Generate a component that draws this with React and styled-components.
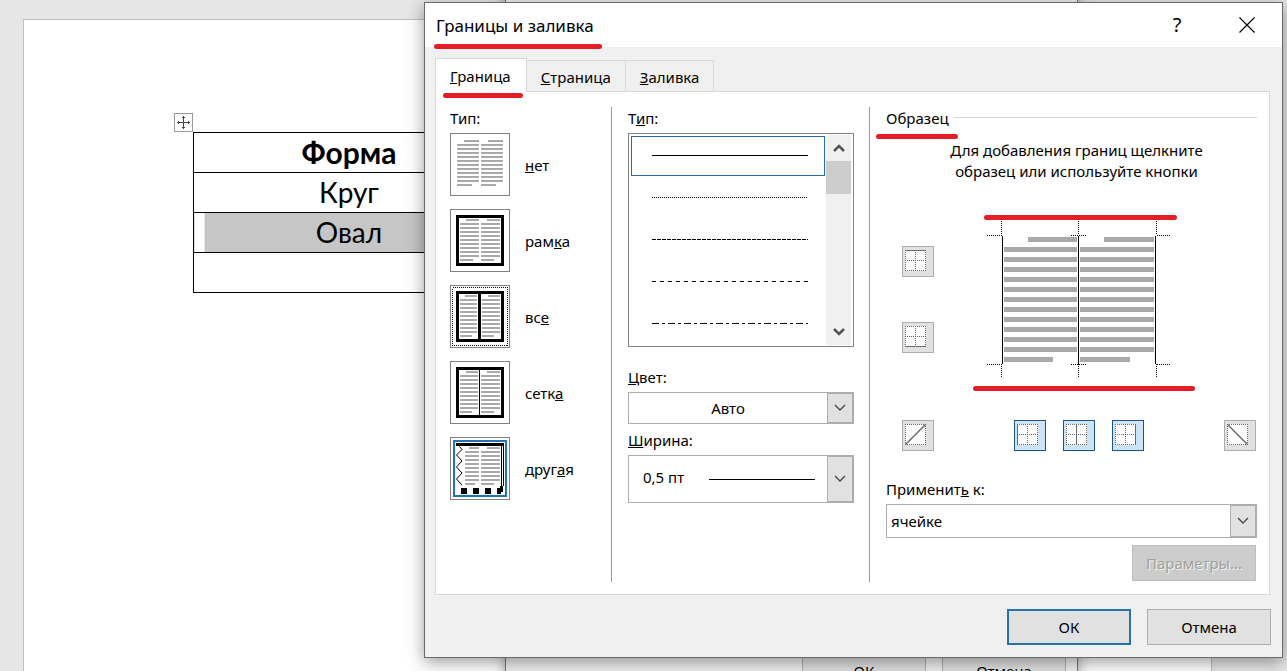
import React, { useState } from 'react';
import styled, { createGlobalStyle, css } from 'styled-components';

const GlobalStyle = createGlobalStyle`
  * {
    box-sizing: border-box;
  }

  body {
    margin: 0;
    background: #e6e6e6;
    color: #000;
    font-family: 'Noto Sans', 'Open Sans', sans-serif;
    font-size: 15px;
    line-height: 22px;
  }

  button, select {
    font: inherit;
    color: inherit;
  }
`;

const Workspace = styled.div`
  position: relative;
  display: flex;
  min-height: 100vh;
  overflow: hidden;
`;

const DocumentPage = styled.main`
  position: relative;
  flex: 1;
  margin: 19px 75px 0 23px;
  padding: 112px 0 0 169px;
  background: #fff;
  border: 1px solid #c0c0c0;
  border-bottom: 0;
`;

const MoveHandle = styled.button`
  position: absolute;
  top: 93px;
  left: 150px;
  display: flex;
  padding: 2px;
  background: #fff;
  border: 1px solid #9a9a9a;
`;

const DocumentTable = styled.table`
  width: 312px;
  border-collapse: collapse;
  font-family: Lato, 'Noto Sans', sans-serif;
  font-size: 28px;
  line-height: 39px;
  text-align: center;

  th, td {
    height: 40px;
    padding: 0;
    border: 1px solid #000;
  }

  th {
    font-size: 30px;
  }
`;

const Cell = styled.td`
  ${({ $selected }) => $selected && css`
    background: linear-gradient(to right, #fff 10px, #c6c6c6 10px);
  `}
`;

const BackDialog = styled.div`
  position: absolute;
  top: -12px;
  right: 209px;
  bottom: -33px;
  left: 505px;
  display: flex;
  align-items: flex-end;
  justify-content: flex-end;
  gap: 16px;
  padding: 0 11px 14px;
  background: #f0f0f0;
  border: 1px solid #777;
  box-shadow: 0 2px 12px rgba(0, 0, 0, 0.35);
`;

const Dialog = styled.section`
  position: absolute;
  top: 2px;
  right: 4px;
  left: 424px;
  background: #f0f0f0;
  border: 1px solid #6b6b6b;
  box-shadow: 0 4px 16px rgba(0, 0, 0, 0.4);
`;

const TitleBar = styled.header`
  display: flex;
  align-items: center;
  height: 44px;
  padding-left: 11px;
  background: #fff;
`;

const Title = styled.h1`
  position: relative;
  flex: 1;
  margin: 0;
  padding-top: 2px;
  font-size: 17px;
  font-weight: 400;
  line-height: 24px;
`;

const TitleButton = styled.button`
  display: flex;
  align-items: center;
  justify-content: center;
  width: 70px;
  height: 44px;
  padding: 0;
  background: transparent;
  border: 0;
  font-size: 20px;
`;

// red pen stroke under a piece of text
const Marker = styled.span`
  position: absolute;
  bottom: ${({ $bottom }) => $bottom}px;
  left: ${({ $left }) => $left}px;
  width: ${({ $width }) => $width}px;
  height: 5px;
  border-radius: 3px;
  background: #e31e26;
  pointer-events: none;
  z-index: 2;
`;

const Body = styled.div`
  padding: 11px 12px 0 10px;
`;

const TabList = styled.div`
  display: flex;
  align-items: flex-end;
`;

const Tab = styled.button`
  position: relative;
  height: 31px;
  padding: 2px 14px 0;
  background: #f0f0f0;
  border: 1px solid #d9d9d9;
  border-left: 0;
  border-bottom: 0;

  ${({ $active }) => $active && css`
    height: 34px;
    margin-bottom: -1px;
    padding: 0 15px 0 14px;
    background: #fff;
    border-left: 1px solid #d9d9d9;
    z-index: 1;
  `}
`;

const Panel = styled.div`
  display: grid;
  grid-template-columns: 176px 258px 1fr;
  padding: 15px 0 12px;
  background: #fff;
  border: 1px solid #d9d9d9;
`;

const Column = styled.div`
  display: flex;
  flex-direction: column;
  padding: 0 15px 0 ${({ $inset }) => $inset || 16}px;
  border-right: 1px solid #9a9a9a;
`;

const SampleColumn = styled.div`
  padding: 0 12px 1px 16px;
`;

const FieldLabel = styled.label`
  display: block;
  margin: ${({ $top }) => $top || 0}px 0 4px;
`;

const Caption = styled.div`
  margin-bottom: 4px;
`;

const PresetList = styled.div`
  display: grid;
  gap: 13px;
`;

const PresetRow = styled.div`
  display: flex;
  align-items: center;
  gap: 15px;
`;

const PresetButton = styled.button`
  display: flex;
  padding: 0;
  background: #fff;
  border: 0;
`;

const ListBox = styled.div`
  display: flex;
  height: 214px;
  padding: 1px 2px 1px 1px;
  border: 1px solid #828282;
`;

const LineOptions = styled.ul`
  flex: 1;
  min-width: 0;
  display: flex;
  flex-direction: column;
  gap: 2px;
  margin: 0;
  padding: 1px;
  list-style: none;
`;

const LineOption = styled.li`
  display: flex;
  height: 40px;
  padding: 0 16px 2px 20px;
  align-items: center;
  border: 1px solid ${({ $selected }) => ($selected ? '#2a6ca5' : 'transparent')};
`;

const LineSvg = styled.svg`
  display: block;
  width: 100%;
  height: 1px;
`;

const ScrollBar = styled.div`
  display: flex;
  flex-direction: column;
  justify-content: space-between;
  width: 25px;
  background: #f0f0f0;
`;

const ScrollButton = styled.button`
  display: flex;
  align-items: center;
  justify-content: center;
  height: 26px;
  padding: 0;
  background: transparent;
  border: 0;
`;

const ScrollThumb = styled.div`
  height: 33px;
  margin-bottom: auto;
  background: #cdcdcd;
`;

const SelectBox = styled.div`
  display: grid;
  grid-template-columns: ${({ $columns }) => $columns || '1fr 26px'};
  height: ${({ $height }) => $height}px;
  border: 1px solid #adadad;
  background: #fff;
`;

const Select = styled.select`
  grid-area: 1 / 1 / 2 / -1;
  width: 100%;
  padding: 0 26px ${({ $lift }) => $lift || 0}px ${({ $inset }) => $inset}px;
  appearance: none;
  background: transparent;
  border: 0;
  border-radius: 0;
  text-align-last: ${({ $align }) => $align || 'left'};
`;

const SelectArrow = styled.span`
  grid-row: 1;
  grid-column: -2;
  display: flex;
  align-items: center;
  justify-content: center;
  background: #e1e1e1;
  border: 1px solid #adadad;
  pointer-events: none;
`;

const WidthLine = styled.span`
  grid-area: 1 / 2;
  align-self: center;
  height: 1px;
  margin-right: 12px;
  background: #000;
  pointer-events: none;
`;

const SampleHeading = styled.div`
  position: relative;
  display: flex;
  align-items: center;
  gap: 5px;

  &::after {
    content: '';
    flex: 1;
    height: 1px;
    margin-bottom: 2px;
    background: #d5d9d9;
  }
`;

const Hint = styled.p`
  margin: 11px 0 31px;
  padding-left: 10px;
  line-height: 21px;
  text-align: center;
`;

const SampleGrid = styled.div`
  display: grid;
  grid-template-columns: 32px 1fr 32px;
  padding: 0 1px 0 16px;
`;

const SideButtons = styled.div`
  display: grid;
  align-content: start;
  gap: 45px;
  padding-top: 33px;
`;

const Preview = styled.svg`
  justify-self: center;
  display: block;
`;

const BottomButtons = styled.div`
  display: flex;
  justify-content: space-between;
  padding: 27px 1px 27px 16px;
`;

const ButtonGroup = styled.div`
  display: flex;
  gap: 17px;
`;

const EdgeButton = styled.button`
  width: 32px;
  height: 31px;
  padding: 3px 2px;
  display: flex;
  background: ${({ $on }) => ($on ? '#cce4f7' : '#e1e1e1')};
  border: 1px solid ${({ $on }) => ($on ? '#1a5488' : '#adadad')};
`;

const PushButton = styled.button`
  width: 124px;
  height: 36px;
  padding: 0;
  background: #e1e1e1;
  border: ${({ $primary }) => ($primary ? '2px solid #2672ab' : '1px solid #adadad')};

  &:disabled {
    background: #ccc;
    border-color: #bfbfbf;
    color: #a0a0a0;
    text-shadow: 1px 1px 0 #f4f4f4;
  }
`;

const Actions = styled.div`
  display: flex;
  justify-content: flex-end;
  gap: 16px;
  margin-top: ${({ $top }) => $top || 0}px;
  padding: ${({ $padding }) => $padding || 0};
`;

// two columns of grey text lines: [first row x, left, right, last row end]
function TextColumns({ top, rows, height, pitch, columns }) {
  return columns.map(([start, left, right, end], c) => (
    <g key={c} fill="#a9a9a9">
      {Array.from({ length: rows }, (_, i) => {
        const x = i === 0 ? start : left;
        const x2 = i === rows - 1 ? end : right;
        return <rect key={i} x={x} y={top + i * pitch} width={x2 - x} height={height} />;
      })}
    </g>
  ));
}

const PRESETS = [
  { id: 'none', label: <><u>н</u>ет</>, top: 7, rows: 12, columns: [[14, 7, 29, 22], [38, 31, 53, 46]] },
  { id: 'box', label: <>рам<u>к</u>а</>, top: 10, rows: 11, columns: [[16, 10, 29, 23], [37, 31, 50, 44]] },
  { id: 'all', label: <>вс<u>е</u></>, top: 10, rows: 11, columns: [[15, 10, 27, 22], [38, 32, 50, 44]] },
  { id: 'grid', label: <>сетк<u>а</u></>, top: 10, rows: 11, columns: [[16, 10, 28, 22], [37, 31, 50, 44]] },
  { id: 'custom', label: <>друг<u>а</u>я</>, top: 10, rows: 10, columns: [[19, 15, 29, 25], [37, 31, 50, 44]] },
];

function PresetPicture({ preset, active }) {
  const { id, top, rows, columns } = preset;
  const framed = id === 'box' || id === 'all' || id === 'grid';
  return (
    <svg width="60" height="63" shapeRendering="crispEdges" aria-hidden="true">
      <rect x="0.5" y="0.5" width="59" height="62" fill="#fff" stroke="#828282" />
      {active && <rect x="4" y="4" width="52" height="55" fill="none" stroke="#2173b5" strokeWidth="2" />}
      {id === 'all' && (
        <rect x="2.5" y="2.5" width="55" height="58" fill="none" stroke="#000" strokeDasharray="1 1" />
      )}
      <TextColumns top={top} rows={rows} height={2} pitch={4} columns={columns} />
      {framed && <rect x="7.5" y="7.5" width="45" height="48" fill="none" stroke="#000" strokeWidth="3" />}
      {id === 'all' && <rect x="28" y="6" width="3" height="51" />}
      {id === 'grid' && <rect x="29" y="6" width="1" height="51" />}
      {id === 'custom' && (
        <g>
          <rect x="6" y="6" width="48" height="3" />
          <path d="M51.5 9V54M53.5 9V49" stroke="#000" />
          <path
            d="M9.5 9.5L12 12.5L6.5 18L12 24L6.5 30L12 36L6.5 42L12 48"
            fill="none"
            stroke="#000"
            shapeRendering="auto"
          />
          <path d="M11 51h6v6h-6zM23 51h6v6h-6zM35 51h6v6h-6zM47 51h4v6h-4zM50 49h3v6h-3z" />
        </g>
      )}
    </svg>
  );
}

const LINE_TYPES = [
  { id: 'solid', name: 'Сплошная', dash: undefined },
  { id: 'dots', name: 'Точки', dash: '1 1' },
  { id: 'short', name: 'Короткий пунктир', dash: '4 1' },
  { id: 'dash', name: 'Пунктир', dash: '4 4' },
  { id: 'dashdot', name: 'Штрихпунктир', dash: '7 3 3 3' },
];

const EDGES = {
  top: 'M0 0.5H21',
  bottom: 'M0 20.5H21',
  left: 'M0.5 0V21',
  center: 'M10.5 0V21',
  right: 'M20.5 0V21',
  up: 'M0.5 20.5L20.5 0.5',
  down: 'M0.5 0.5L20.5 20.5',
};

function EdgeIcon({ edge }) {
  const diagonal = edge === 'up' || edge === 'down';
  return (
    <svg width="21" height="21" aria-hidden="true">
      <rect width="21" height="21" fill="#fff" />
      <g fill="none" stroke="#666" shapeRendering="crispEdges">
        <path d="M0 0.5H21M0 20.5H21M0.5 0V21M20.5 0V21" strokeDasharray="1 1" />
        {!diagonal && <path d="M10.5 0V21M0 10.5H21" strokeDasharray="1 1" />}
      </g>
      <path
        d={EDGES[edge]}
        stroke="#6a6a6a"
        strokeWidth={diagonal ? 1.5 : 1}
        shapeRendering={diagonal ? 'auto' : 'crispEdges'}
      />
    </svg>
  );
}

function Edge({ edge, label, on, onToggle }) {
  return (
    <EdgeButton $on={on} aria-label={label} aria-pressed={on} onClick={() => onToggle(edge)}>
      <EdgeIcon edge={edge} />
    </EdgeButton>
  );
}

function SamplePreview({ edges }) {
  return (
    <Preview width="234" height="180" aria-hidden="true">
      <TextColumns
        top={24}
        rows={13}
        height={5}
        pitch={10}
        columns={[[66, 42, 115, 91], [142, 118, 192, 168]]}
      />
      <g stroke="#000" fill="none" shapeRendering="crispEdges">
        <path
          d="M39.5 8V22M116.5 8V22M194.5 8V22M39.5 151V165M116.5 151V165M194.5 151V165M25 22.5H40M109 22.5H124M195 22.5H208M25 151.5H40M109 151.5H124M195 151.5H208"
          strokeDasharray="1 1"
        />
        {edges.top && <path d="M40 22.5H194" />}
        {edges.bottom && <path d="M40 151.5H194" />}
        {edges.left && <path d="M40.5 23V151" />}
        {edges.center && <path d="M116.5 23V151" />}
        {edges.right && <path d="M193.5 23V151" />}
      </g>
      <path d="M24.5 4.5H212.5M13.5 175.5H230.5" stroke="#e31e26" strokeWidth="5" strokeLinecap="round" />
    </Preview>
  );
}

function Chevron() {
  return (
    <svg width="12" height="8" fill="none" stroke="#444" strokeWidth="1.3" aria-hidden="true">
      <path d="M1 1L6 6L11 1" />
    </svg>
  );
}

function App() {
  const [preset, setPreset] = useState('custom');
  const [lineType, setLineType] = useState('solid');
  const [edges, setEdges] = useState({ left: true, center: true, right: true });

  const toggleEdge = (edge) => setEdges((prev) => ({ ...prev, [edge]: !prev[edge] }));

  return (
    <Workspace>
      <GlobalStyle />
      <DocumentPage>
        <MoveHandle aria-label="Переместить таблицу">
          <svg width="13" height="13" fill="none" stroke="#444" aria-hidden="true">
            <path d="M6.5 0V13M0 6.5H13" />
            <path d="M5 1.5H8M5 11.5H8M1.5 5V8M11.5 5V8" />
          </svg>
        </MoveHandle>
        <DocumentTable>
          <thead>
            <tr><th>Форма</th></tr>
          </thead>
          <tbody>
            <tr><Cell>Круг</Cell></tr>
            <tr><Cell $selected>Овал</Cell></tr>
            <tr><Cell /></tr>
          </tbody>
        </DocumentTable>
      </DocumentPage>

      <BackDialog>
        <PushButton>ОК</PushButton>
        <PushButton>Отмена</PushButton>
      </BackDialog>

      <Dialog role="dialog" aria-labelledby="dialog-title">
        <TitleBar>
          <Title id="dialog-title">
            Границы и заливка
            <Marker $left={-2} $width={168} $bottom={-11} />
          </Title>
          <TitleButton aria-label="Справка">?</TitleButton>
          <TitleButton aria-label="Закрыть">
            <svg width="16" height="16" stroke="#000" strokeWidth="1.2" aria-hidden="true">
              <path d="M0.5 0.5L15.5 15.5M15.5 0.5L0.5 15.5" />
            </svg>
          </TitleButton>
        </TitleBar>

        <Body>
          <TabList role="tablist">
            <Tab role="tab" aria-selected="true" $active>
              <u>Г</u>раница
              <Marker $left={7} $width={80} $bottom={-6} />
            </Tab>
            <Tab role="tab" aria-selected="false"><u>С</u>траница</Tab>
            <Tab role="tab" aria-selected="false"><u>З</u>аливка</Tab>
          </TabList>

          <Panel role="tabpanel">
            <Column $inset={14}>
              <Caption>Тип:</Caption>
              <PresetList>
                {PRESETS.map((item) => (
                  <PresetRow key={item.id}>
                    <PresetButton id={`preset-${item.id}`} onClick={() => setPreset(item.id)}>
                      <PresetPicture preset={item} active={preset === item.id} />
                    </PresetButton>
                    <label htmlFor={`preset-${item.id}`}>{item.label}</label>
                  </PresetRow>
                ))}
              </PresetList>
            </Column>

            <Column>
              <Caption id="line-type">Т<u>и</u>п:</Caption>
              <ListBox>
                <LineOptions role="listbox" aria-labelledby="line-type">
                  {LINE_TYPES.map(({ id, name, dash }) => (
                    <LineOption
                      key={id}
                      role="option"
                      aria-label={name}
                      aria-selected={lineType === id}
                      $selected={lineType === id}
                      onClick={() => setLineType(id)}
                    >
                      <LineSvg shapeRendering="crispEdges">
                        <line x1="0" y1="0.5" x2="100%" y2="0.5" stroke="#000" strokeDasharray={dash} />
                      </LineSvg>
                    </LineOption>
                  ))}
                </LineOptions>
                <ScrollBar>
                  <ScrollButton aria-label="Вверх">
                    <svg width="12" height="10" fill="none" stroke="#555" strokeWidth="2.6" aria-hidden="true">
                      <path d="M1 8L6 3L11 8" />
                    </svg>
                  </ScrollButton>
                  <ScrollThumb />
                  <ScrollButton aria-label="Вниз">
                    <svg width="12" height="10" fill="none" stroke="#555" strokeWidth="2.6" aria-hidden="true">
                      <path d="M1 2L6 7L11 2" />
                    </svg>
                  </ScrollButton>
                </ScrollBar>
              </ListBox>

              <FieldLabel htmlFor="color" $top={19}><u>Ц</u>вет:</FieldLabel>
              <SelectBox $height={32}>
                <Select id="color" $align="center" $inset={0}>
                  <option>Авто</option>
                </Select>
                <SelectArrow><Chevron /></SelectArrow>
              </SelectBox>

              <FieldLabel htmlFor="width" $top={5}><u>Ш</u>ирина:</FieldLabel>
              <SelectBox $height={48} $columns="80px 1fr 26px">
                <Select id="width" $inset={14} $lift={4}>
                  <option>0,5 пт</option>
                </Select>
                <WidthLine />
                <SelectArrow><Chevron /></SelectArrow>
              </SelectBox>
            </Column>

            <SampleColumn>
              <SampleHeading>
                Образец
                <Marker $left={-10} $width={82} $bottom={-10} />
              </SampleHeading>
              <Hint>
                Для добавления границ щелкните
                <br />
                образец или используйте кнопки
              </Hint>
              <SampleGrid>
                <SideButtons>
                  <Edge edge="top" label="Верхняя граница" on={!!edges.top} onToggle={toggleEdge} />
                  <Edge edge="bottom" label="Нижняя граница" on={!!edges.bottom} onToggle={toggleEdge} />
                </SideButtons>
                <SamplePreview edges={edges} />
              </SampleGrid>
              <BottomButtons>
                <Edge edge="up" label="Диагональ вверх" on={!!edges.up} onToggle={toggleEdge} />
                <ButtonGroup>
                  <Edge edge="left" label="Левая граница" on={edges.left} onToggle={toggleEdge} />
                  <Edge edge="center" label="Внутренняя граница" on={edges.center} onToggle={toggleEdge} />
                  <Edge edge="right" label="Правая граница" on={edges.right} onToggle={toggleEdge} />
                </ButtonGroup>
                <Edge edge="down" label="Диагональ вниз" on={!!edges.down} onToggle={toggleEdge} />
              </BottomButtons>

              <FieldLabel htmlFor="apply">Применит<u>ь</u> к:</FieldLabel>
              <SelectBox $height={34}>
                <Select id="apply" $inset={4}>
                  <option>ячейке</option>
                </Select>
                <SelectArrow><Chevron /></SelectArrow>
              </SelectBox>
              <Actions $top={7} $padding="0 1px 0 0">
                <PushButton disabled>Параметры...</PushButton>
              </Actions>
            </SampleColumn>
          </Panel>
        </Body>

        <Actions $padding="14px 11px 12px">
          <PushButton $primary>ОК</PushButton>
          <PushButton>Отмена</PushButton>
        </Actions>
      </Dialog>
    </Workspace>
  );
}

export default App;
